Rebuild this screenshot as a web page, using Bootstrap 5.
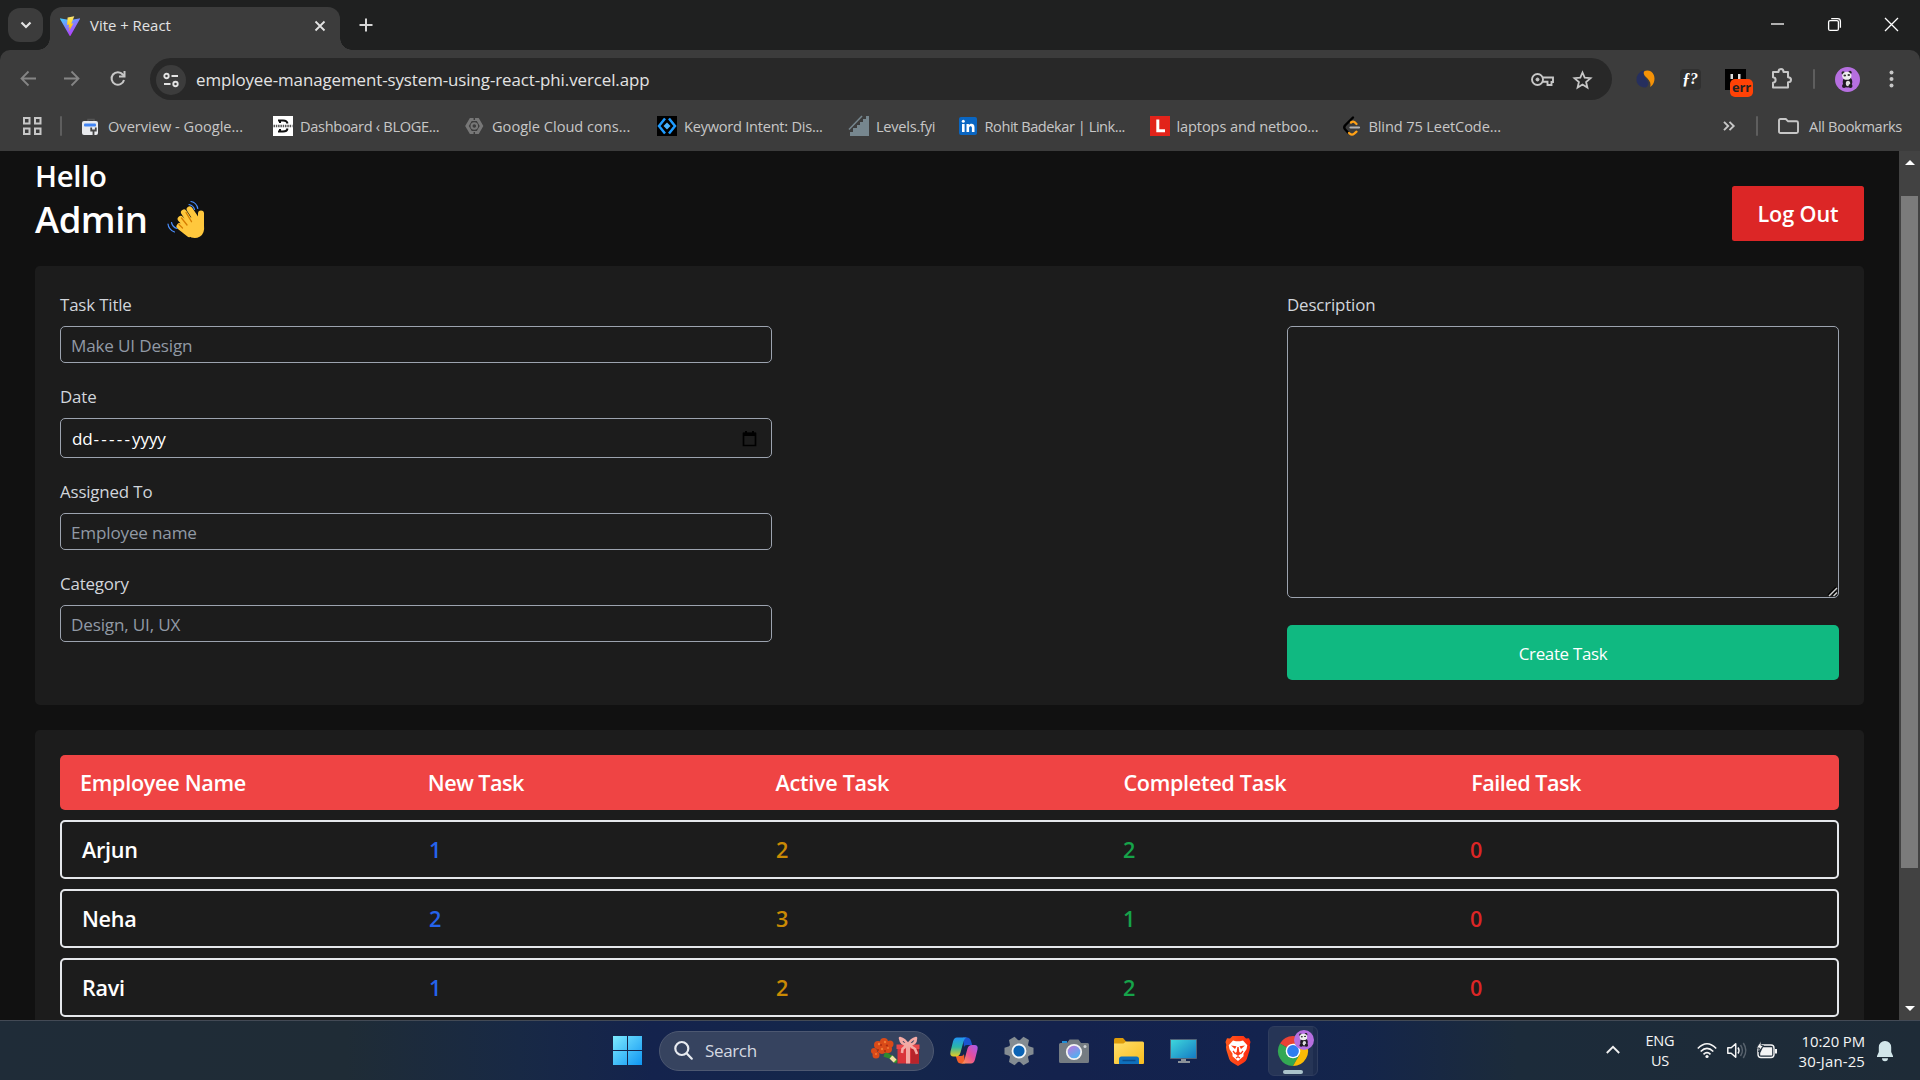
<!DOCTYPE html>
<html lang="en" data-bs-theme="dark">
<head>
<meta charset="utf-8">
<title>Vite + React</title>
<link href="https://cdn.jsdelivr.net/npm/bootstrap@5.3.0/dist/css/bootstrap.min.css" rel="stylesheet">
<style>
body{width:1920px;height:1080px;overflow:hidden;background:#111;color:#fff;font-family:"Open Sans","Noto Sans",sans-serif;font-size:16.9px;letter-spacing:-.17px;line-height:25px}
svg{display:block;flex:none;overflow:visible}
.titlebar{height:50px;background:#1f2020;padding-left:8px}
.tab-menu{width:35px;height:34px;border-radius:12px;background:#3c3c3c;margin-top:8px}
.browser-tab{width:290px;height:43px;margin:7px 0 0 7px;background:#3c3c3c;border-radius:12px 12px 0 0;padding:0 15px 6px 10px;font-size:14.9px;letter-spacing:0;color:#e3e3e3;position:relative}
.browser-tab span{margin-left:10px}
.browser-tab::before,.browser-tab::after{content:"";position:absolute;bottom:0;width:12px;height:12px}
.browser-tab::before{left:-12px;background:radial-gradient(circle at 0 0,transparent 11.5px,#3c3c3c 12px)}
.browser-tab::after{right:-12px;background:radial-gradient(circle at 100% 0,transparent 11.5px,#3c3c3c 12px)}
.new-tab{margin:18px 0 0 19px}
.window-buttons{padding:0 22px 2px 0;gap:44px}
.chrome-top{background:#1f2020}
.chrome-bars{height:101px;background:#3c3c3c;border-radius:10px 10px 0 0}
.address-row{height:58px;padding:0 26px 0 20px}
.nav-forward{margin-left:28px}.nav-reload{margin-left:30px}
.omnibox{width:1462px;height:42px;border-radius:21px;background:#282828;margin-left:24px;padding:1px 20px 0 6px;font-size:16.9px;letter-spacing:-.08px;color:#e3e3e3}
.omnibox-url{margin-left:10px}
.omnibox-star{margin-left:19px}
.site-info{width:30px;height:30px;border-radius:50%;background:#3c3c3c}
.ext-icons{margin-left:24px;gap:24.5px}
.ext-fn{width:21px;height:21px;background:#303030;border-radius:4px;font:italic bold 16px "Liberation Serif",serif}
.ext-err{width:21px;height:21px;background:#000}
.ext-badge{position:absolute;left:5px;top:10px;width:23px;height:18px;border-radius:5px;background:#ff4206;color:#222;font:bold 13px/17px "Open Sans",sans-serif;letter-spacing:-.2px;text-align:center}
.profile-area{margin-left:20px;gap:20px}
.menu-dots{margin-left:9px}
.rule{width:2px;height:20px;background:#5e5e5e;border-radius:1px}
.bookmark-row{height:35px;padding:0 18px 0 22px;font-size:14.6px;line-height:20px;color:#c7c7c7}
.bookmark-row>.rule{margin:0 19px 0 18px}
.bm{width:192px;gap:7px;white-space:nowrap}
.bm-short{width:108.5px}
.bm-last{width:auto}
.t-wide{letter-spacing:0}.t-1{letter-spacing:-.12px}.t-2{letter-spacing:-.25px}.t-3{letter-spacing:-.33px}.t-4{letter-spacing:-.45px}
.bookmark-row>.rule-end{margin:0 20px 0 21px}
.all-bm{margin-left:10px}
.page-view{height:869px;overflow:hidden}
.page-main{padding:5px 35px 0}
.hello{font-size:29.3px;line-height:40px;font-weight:600;letter-spacing:-.3px}
.admin{font-size:36.5px;line-height:45px;letter-spacing:-.5px;gap:19px;padding-top:1px;height:45px}
.wave{margin-top:3px}
.fw-mid{font-weight:600;font-size:21.6px;letter-spacing:-.3px;line-height:35px}
.grid-head .tight{letter-spacing:-.5px}
.btn-logout{width:132px;height:55px;background:#dc2626;border-radius:2.5px;padding:0;letter-spacing:-.1px}
.panel{background:#1c1c1c;border-radius:5px;padding:25px;margin-top:25px}
.panel-form{height:439px}
.panel-form label{display:block;height:35px;padding-top:1px;color:#d1d5db;line-height:25px}
.field{height:37px;width:100%;border:1px solid #9ca3af;border-radius:5px;background:transparent;padding:1px 10px 0;color:#fff;margin-bottom:20px;display:block;font-size:17.1px;letter-spacing:-.17px;outline:0}
.field::placeholder{color:#9199a5;opacity:1}
.field-date{height:40px;padding:0 14px 0 11px}
.dashes{letter-spacing:2.200px;margin-left:1px}
textarea.field{height:272px;margin-bottom:27px;resize:none}
.grip{position:absolute;right:2px;bottom:2px}
.col-left{width:712px}.col-right{width:552px}
.btn-create{height:55px;background:#10b981;border-radius:5px;color:#fff;padding-top:2px;letter-spacing:-.3px}
.grid-head,.grid-line{border-radius:5px}
.grid-head{background:#ef4444;height:55px;padding:0 20px}
.grid-line{height:59px;border:2px solid #e5e7eb;padding:0 20px;margin-top:10px}
.grid-head>*,.grid-line>*{width:20%;flex:none}
.c-new{color:#2563eb}.c-act{color:#ca8a04}.c-done{color:#16a34a}.c-fail{color:#dc2626}
.scroll-rail{width:21px;background:#424242;padding:9px 0}
.scroll-thumb{width:17px;height:672px;background:#7b7b7b;margin-top:31px}
.taskbar{height:60px;border-top:1px solid #434a55;background:linear-gradient(90deg,#1f2c38 0,#1f2c36 18%,#182945 27%,#14234d 34%,#14274a 44%,#14224d 55%,#13234e 66%,#14254a 71%,#1c2b3a 79%,#1e2b37 100%);padding-left:613px;color:#f5f5f5}
.search-pill{width:275px;height:40px;border-radius:20px;background:#36435f;border:1px solid #4d5871;margin:0 2.5px 0 17px;padding:0 13px 0 14px;gap:12px;font-size:17px;letter-spacing:-.35px;color:#d5d9e1}
.app-slot{width:54.9px;height:59px}
.app-active{width:50px;height:50px;border-radius:6px;background:linear-gradient(90deg,#263556 44px,#1d2c4e 44px);border:1px solid #2f3d5e;padding:9px;position:relative}
.app-active::after{content:"";position:absolute;left:14px;bottom:1px;width:20px;height:4px;border-radius:2px;background:#abc3cb}
.app-avatar{position:absolute;left:25px;top:3px}
.tray{padding-right:26px;font-size:14.5px;line-height:20px}
.tray-lang{width:40px;margin:0 17px 0 20px}
.tray-icons{gap:10px}
.tray-clock{width:88px;font-size:14.9px;letter-spacing:-.1px;margin-right:11px}
.tray-date{letter-spacing:.15px}
</style>
<script src="https://cdn.jsdelivr.net/npm/bootstrap@5.3.0/dist/js/bootstrap.bundle.min.js"></script>
</head>
<body>
<div class="chrome-top">
  <div class="titlebar d-flex">
    <div class="tab-menu d-flex align-items-center justify-content-center"><svg width="12" height="8" fill="none" stroke="#e3e3e3" stroke-width="2.200"><path d="M1.500 1.500 6 6l4.500-4.500"/></svg></div>
    <div class="browser-tab d-flex align-items-center">
      <svg width="20" height="20" viewBox="0 0 20 20"><defs><linearGradient id="va" x1="0" y1="0" x2=".6" y2="1"><stop offset="0" stop-color="#41d1ff"/><stop offset="1" stop-color="#bd34fe"/></linearGradient><linearGradient id="vb" x1="0" y1="0" x2="0" y2="1"><stop offset="0" stop-color="#ffea83"/><stop offset=".3" stop-color="#ffdd35"/><stop offset="1" stop-color="#ffa800"/></linearGradient></defs><path fill="url(#va)" d="M19.800 3.300 10.500 19.700a.5.5 0 0 1-.9 0L.2 3.300a.5.5 0 0 1 .6-.8l9.200 1.600 9.200-1.600a.5.5 0 0 1 .6.8z"/><path fill="url(#vb)" d="M14.300.2 7.600 1.500l-.5 7.500 2-.4-.6 3.100 1.300-.4-.9 4.300 4.500-8.300-2.200.4z"/></svg>
      <span>Vite + React</span>
      <svg class="ms-auto" width="10" height="10" stroke="#e3e3e3" stroke-width="1.800"><path d="m.5.5 9 9m0-9-9 9"/></svg>
    </div>
    <svg class="new-tab" width="14" height="14" stroke="#d6d6d6" stroke-width="2"><path d="M7 .5v13M.5 7h13"/></svg>
    <div class="window-buttons ms-auto d-flex align-items-center">
      <svg width="13" height="13" stroke="#fff" stroke-width="1.300"><path d="M0 6h13"/></svg>
      <svg width="13" height="13" fill="none" stroke="#fff" stroke-width="1.300"><rect x=".6" y="2.600" width="9.800" height="9.800" rx="1.500"/><path d="M3.200.6h6.500a2.700 2.700 0 0 1 2.700 2.700v6.500"/></svg>
      <svg width="13" height="13" stroke="#fff" stroke-width="1.300"><path d="m0 0 13 13M13 0 0 13"/></svg>
    </div>
  </div>
  <div class="chrome-bars">
    <div class="address-row d-flex align-items-center">
      <svg width="16" height="16" fill="none" stroke="#858585" stroke-width="1.800"><path d="M16 7.500H2m6.500-7-7 7 7 7"/></svg>
      <svg class="nav-forward" width="16" height="16" fill="none" stroke="#858585" stroke-width="1.800"><path d="M0 7.500h14M7.500.5l7 7-7 7"/></svg>
      <svg class="nav-reload" width="16" height="16" fill="none" stroke="#c7c7c7" stroke-width="2"><path d="M14 9A6.300 6.300 0 1 1 12.800 3.500L14 4.800"/><path d="M14.500 0v5.500H9"/></svg>
      <div class="omnibox d-flex align-items-center">
        <span class="site-info d-flex align-items-center justify-content-center"><svg width="16" height="14" fill="none" stroke="#e3e3e3" stroke-width="1.900"><circle cx="3.500" cy="3" r="2.200"/><path d="M8.500 3H15M1 11h6.500"/><circle cx="12.500" cy="11" r="2.200"/></svg></span>
        <span class="omnibox-url">employee-management-system-using-react-phi.vercel.app</span>
        <svg class="ms-auto" width="23" height="15" fill="none" stroke="#c7c7c7" stroke-width="1.900"><circle cx="6.500" cy="7.500" r="5.500"/><circle cx="6.500" cy="7.500" r="1.500" fill="#c7c7c7" stroke-width="1"/><path d="M11.500 5.500H22v4.500h-1.500v3h-4V9.700h-5"/></svg>
        <svg class="omnibox-star" width="19" height="18" fill="none" stroke="#c7c7c7" stroke-width="1.800"><path d="m9.500 1.500 2.200 5.200 5.800.5-4.400 3.800 1.300 5.600-4.900-3-4.900 3 1.300-5.600L1.500 7.200l5.800-.5z"/></svg>
      </div>
      <div class="ext-icons d-flex align-items-center">
        <svg width="19" height="18" viewBox="0 0 19 18"><path fill="#262f5e" d="M8 .5A9 9 0 0 0 .5 10c0 5 5 7.500 9 7.500 3-1.500 3.500-4 2-6.500S7 7 8 .5z"/><path fill="#f59207" d="M8 1.500c3-2 8-1 9.800 3.500s0 10-3.600 12c1-3-.2-6-2.700-8.500S7 4.500 8 1.500z"/></svg>
        <span class="ext-fn d-flex align-items-center justify-content-center">ƒ?</span>
        <span class="ext-err position-relative"><svg width="21" height="10" fill="#ddd"><path d="M5.500 5h2.500v5H5.500zM13 5h2.500v5H13z"/></svg><span class="ext-badge">err</span></span>
        <svg width="22" height="22" fill="none" stroke="#c7c7c7" stroke-width="2"><path d="M2 4h5.500c0-4 5-4 5 0H17v5.200c4 0 4 5 0 5V19.500H2v-4.800c3.500-.5 3.500-5 0-5.400z" stroke-linejoin="round"/></svg>
      </div>
      <div class="profile-area d-flex align-items-center flex-grow-1">
        <span class="rule"></span>
        <svg width="25" height="25" viewBox="0 0 25 25"><g id="panda"><circle cx="12.500" cy="12.500" r="12.500" fill="#b66fe0"/><circle cx="8.200" cy="6" r="1.700" fill="#222"/><circle cx="15" cy="5.500" r="1.700" fill="#222"/><ellipse cx="12.500" cy="15" rx="4.800" ry="5.500" fill="#1e1a22"/><ellipse cx="13" cy="16.500" rx="2.200" ry="2.800" fill="#ddd"/><ellipse cx="11.800" cy="8.800" rx="4.700" ry="4" fill="#eee"/><ellipse cx="9.800" cy="8.500" rx="1.300" ry=".9" fill="#333"/><ellipse cx="13.800" cy="8" rx="1.300" ry=".9" fill="#333"/><circle cx="9" cy="19" r="2" fill="#1e1a22"/><circle cx="15.500" cy="19" r="2" fill="#1e1a22"/></g></svg>
        <svg class="menu-dots" width="5" height="19" fill="#c7c7c7"><circle cx="2.500" cy="2.500" r="2"/><circle cx="2.500" cy="9" r="2"/><circle cx="2.500" cy="15.500" r="2"/></svg>
      </div>
    </div>
    <div class="bookmark-row d-flex align-items-center">
      <svg width="20" height="18" fill="none" stroke="#c7c7c7" stroke-width="2"><path d="M2 1h5.500v5.500H2zM13 1h5.500v5.500H13zM2 11.500h5.500V17H2zM13 11.500h5.500V17H13z"/></svg>
      <span class="rule"></span>
      <div class="bm d-flex align-items-center"><svg width="20" height="20"><path d="M7 5V3.500h6V5" fill="none" stroke="#555" stroke-width="1.500"/><rect x="1" y="5" width="16" height="14" rx="2" fill="#e8eaed"/><rect x="3" y="7.500" width="12" height="3" rx="1" fill="#4285f4"/><path d="M12.500 19.500v-4m-2.300-4v3h4.600v-3" stroke="#444" stroke-width="1.800" fill="none"/></svg><span class="t-wide">Overview - Google...</span></div>
      <div class="bm d-flex align-items-center"><svg width="20" height="20"><path fill="#fff" d="M0 0h20v20H0z"/><path d="M5 4.500h5q4 0 4.500 3M5 15.500h5q4 0 4.500-3M7 5v2M7 13v2" fill="none" stroke="#111" stroke-width="2"/><path d="M.5 10h19" stroke="#555" stroke-width="2.500" stroke-dasharray="1.500 .8"/></svg><span class="t-3">Dashboard ‹ BLOGE...</span></div>
      <div class="bm d-flex align-items-center"><svg width="20" height="20" fill="none" stroke="#777"><path d="M5.800 3.500h7L16.500 10l-3.700 6.500h-7L2 10z" stroke-width="3.200"/><circle cx="9.300" cy="10" r="2.800" stroke-width="2"/><path d="M9.300 0v4M9.300 16v4" stroke="#3c3c3c" stroke-width="1.500"/></svg><span class="t-wide">Google Cloud cons...</span></div>
      <div class="bm d-flex align-items-center"><svg width="20" height="20"><path d="M0 0h20v20H0z"/><path d="M8 2.500 2 10l6 7.500M12 2.500 18 10l-6 7.500" fill="none" stroke="#1e9bff" stroke-width="2.500"/><path d="m10 6.500 3.500 3.500-3.500 3.500L6.500 10z" fill="#4ab4ff"/></svg><span class="t-2">Keyword Intent: Dis...</span></div>
      <div class="bm bm-short d-flex align-items-center"><svg width="20" height="20"><path d="M1 20v-4h3v-4h4V9h3V6h3V3h3V0h3v20z" fill="#76868e"/><path d="M0 13.500 13 0" stroke="#76868e" stroke-width="1.500"/></svg><span class="t-2">Levels.fyi</span></div>
      <div class="bm d-flex align-items-center"><svg width="20" height="20"><rect x="1" y="1" width="18" height="18" rx="2" fill="#0a66c2"/><path d="M4 8h2.600v8H4zM8.500 8h2.400v1.200c1.400-2.200 5.600-2 5.600 2V16h-2.600v-4.200c0-2.300-2.800-2.100-2.800 0V16H8.500z" fill="#fff"/><circle cx="5.300" cy="5.200" r="1.500" fill="#fff"/></svg><span class="t-4">Rohit Badekar | Link...</span></div>
      <div class="bm d-flex align-items-center"><svg width="20" height="20"><path fill="#e2231a" d="M0 0h20v20H0z"/><path d="M7.800 3.500v11.200H15" fill="none" stroke="#fff" stroke-width="3"/></svg><span class="t-1">laptops and netboo...</span></div>
      <div class="bm bm-last d-flex align-items-center"><svg width="20" height="20" fill="none" stroke-linecap="round"><path d="m11 1.500-8 8q-1.500 2 0 3.800l3 3.200" stroke="#000" stroke-width="2.400"/><path d="m7 17 .8.700q2.200 1.800 4.400 0l2.300-2M9 6.500q2.500-2 4.500.5l1 1" stroke="#ffa116" stroke-width="2.300"/><path d="M8.500 11.500h8.500" stroke="#b3b3b3" stroke-width="2.200"/></svg><span class="t-1">Blind 75 LeetCode...</span></div>
      <svg class="ms-auto" width="12" height="10" fill="none" stroke="#c7c7c7" stroke-width="1.900"><path d="m1 .8 4.200 4.200L1 9.200M6.500.8 10.700 5 6.500 9.200"/></svg>
      <span class="rule rule-end"></span>
      <svg width="21" height="16" fill="none" stroke="#c7c7c7" stroke-width="1.900"><path d="M1 13.500v-11Q1 1 2.500 1h5.300l2.300 2.300h8.400Q20 3.300 20 4.800v8.700q0 1.500-1.500 1.500h-16Q1 15 1 13.500z"/></svg>
      <span class="all-bm t-3">All Bookmarks</span>
    </div>
  </div>
</div>

<div class="page-view d-flex">
  <main class="page-main flex-grow-1">
    <header class="d-flex align-items-end justify-content-between">
      <div>
        <div class="hello">Hello</div>
        <div class="hello admin d-flex">Admin
          <svg class="wave" width="38" height="40" viewBox="0 0 38 40" stroke-linecap="round" stroke-linejoin="round"><g fill="none" stroke="#ffc83d" stroke-width="6"><path d="M22.700 9.300 31 22M17 12.500l9 14M13.700 19l10 11M12.500 26.300 22 34M34 13.500v14"/></g><path fill="#ffc83d" d="M17 20 28 16l9 10q1 7-4 10.500-6 3.500-12-1L11 27z"/><path fill="none" stroke="#d67d00" stroke-width="1.300" d="m19 12.500 5.500 9.200M14.500 18l5.500 7M12 24.500l3.500 3.500"/><path fill="none" stroke="#4a8fff" stroke-width="1.200" d="M24 1.500q5.500 1 6.800 7M22 4.500q4.500 1 5.500 5M1 24q.5 5.500 6.500 8M4.500 22.500q1 4.500 5.500 6"/></svg>
        </div>
      </div>
      <button class="btn btn-logout text-white fw-mid">Log Out</button>
    </header>

    <form class="panel panel-form d-flex justify-content-between">
      <div class="col-left">
        <label>Task Title</label><input class="field" placeholder="Make UI Design">
        <label>Date</label>
        <div class="field field-date d-flex align-items-center justify-content-between"><span>dd<span class="dashes">-----</span>yyyy</span>
          <svg width="15" height="17"><path d="M1.500 3.500h12v12h-12z" fill="none" stroke="#000" stroke-width="1.700"/><path d="M1 2.500h13V6H1zM3 1h2v2H3zM10 1h2v2h-2z"/></svg></div>
        <label>Assigned To</label><input class="field" placeholder="Employee name">
        <label>Category</label><input class="field" placeholder="Design, UI, UX">
      </div>
      <div class="col-right">
        <label>Description</label>
        <div class="position-relative"><textarea class="field"></textarea>
          <svg class="grip" width="9" height="9" stroke-width="1.400"><path d="M0 8 8 0M4.500 8 8 4.500" stroke="#000"/><path d="M1 9 9 1M5.500 9 9 5.500" stroke="#d0d0d0"/></svg></div>
        <div class="btn-create d-flex align-items-center justify-content-center">Create Task</div>
      </div>
    </form>

    <section class="panel">
      <div class="grid-head fw-mid d-flex align-items-center"><span>Employee Name</span><span class="tight">New Task</span><span>Active Task</span><span>Completed Task</span><span class="tight">Failed Task</span></div>
      <div class="grid-line fw-mid d-flex align-items-center"><span>Arjun</span><span class="c-new">1</span><span class="c-act">2</span><span class="c-done">2</span><span class="c-fail">0</span></div>
      <div class="grid-line fw-mid d-flex align-items-center"><span>Neha</span><span class="c-new">2</span><span class="c-act">3</span><span class="c-done">1</span><span class="c-fail">0</span></div>
      <div class="grid-line fw-mid d-flex align-items-center"><span>Ravi</span><span class="c-new">1</span><span class="c-act">2</span><span class="c-done">2</span><span class="c-fail">0</span></div>
    </section>
  </main>
  <div class="scroll-rail d-flex flex-column align-items-center">
    <svg width="10" height="5" fill="#fff"><path d="M5 0l5 5H0z"/></svg>
    <div class="scroll-thumb"></div>
    <svg class="mt-auto" width="10" height="5" fill="#fff"><path d="M0 0h10L5 5z"/></svg>
  </div>
</div>

<footer class="taskbar d-flex align-items-center">
  <svg width="29" height="29"><defs><linearGradient id="win" gradientUnits="userSpaceOnUse" x1="0" y1="0" x2="29" y2="29"><stop offset="0" stop-color="#7deaff"/><stop offset="1" stop-color="#0f95f2"/></linearGradient></defs><path fill="url(#win)" d="M0 0h14v14H0zM15 0h14v14H15zM0 15h14v14H0zM15 15h14v14H15z"/></svg>
  <div class="search-pill d-flex align-items-center">
    <svg width="19" height="19" fill="none" stroke="#e8ebf0" stroke-width="2.200" stroke-linecap="round"><circle cx="7.800" cy="7.500" r="6.500"/><path d="m12.800 12.500 5 5.200"/></svg>
    <span>Search</span>
    <svg class="ms-auto" width="50" height="28"><path d="M15 16 27 25M14 18l10 3" stroke="#2f8a2d" stroke-width="3.500"/><path d="m21 18 6 5-3 3z" fill="#58a83a"/><path d="m21 20 4 4" stroke="#f3dfa0" stroke-width="4"/><g fill="#d94a18"><circle cx="8" cy="8" r="4"/><circle cx="14" cy="5" r="4"/><circle cx="20" cy="7" r="3.500"/><circle cx="12" cy="12" r="5"/><circle cx="4" cy="14" r="3"/><circle cx="18" cy="12" r="4"/><circle cx="6" cy="18" r="3.500"/></g><g fill="#a82c10"><circle cx="11" cy="8" r="1"/><circle cx="17" cy="8.500" r="1"/><circle cx="8" cy="13" r="1"/><circle cx="15" cy="14" r="1"/></g><g fill="#f27a35"><circle cx="9" cy="7" r="1.200"/><circle cx="15" cy="5" r="1.200"/><circle cx="12" cy="12" r="1.200"/><circle cx="18" cy="11" r="1"/><circle cx="6" cy="17" r="1"/></g><path fill="#d9343a" d="M27.500 8h21.500v18.500H27.500z"/><path fill="#b8242b" d="M41 12h8v14.500h-8z"/><path fill="#e8474b" d="M26.500 7.500h23v4.500h-23z"/><path fill="#f3a7a2" d="M36 8h4v18.500h-4z"/><path fill="none" stroke="#f4aaa5" stroke-width="2.600" stroke-linejoin="round" d="M38 8Q31 8 30 1q5 1 8 7 3-6 8-7 0 7-8 7M37 8l-4.500 4-.5 4M39 8l6 4 2 5"/></svg>
  </div>
  <div class="app-slot d-flex align-items-center justify-content-center"><svg width="28" height="27"><defs><linearGradient id="cpa" x1="0" y1="0" x2="0" y2="1"><stop offset="0" stop-color="#2293f5"/><stop offset=".5" stop-color="#2bb7a7"/><stop offset="1" stop-color="#e8cd20"/></linearGradient><linearGradient id="cpb" x1="1" y1="0" x2="0" y2="1"><stop offset="0" stop-color="#a45cf0"/><stop offset=".5" stop-color="#e74e99"/><stop offset="1" stop-color="#ff9a48"/></linearGradient></defs><path fill="#1b54d0" d="M13 .5h4q3 0 4 3.500l1.200 4H17q-2.500 0-3 2z"/><path fill="#f0602a" d="M15 26.500h-4q-3 0-4-3.500L5.800 19H11q2.500 0 3-2z"/><path fill="url(#cpa)" d="M7 .5h10q-2.500.5-3.500 4l-3 11Q9.500 19.500 6 19.500H3.500Q-.5 19.500.5 14.500l2.500-10Q4 .5 7 .5z"/><path fill="url(#cpb)" d="M21 26.500H11q2.500-.5 3.500-4l3-11Q18.500 8 22 8h2.500q4 0 3 4.500l-2.500 10q-1 4-4 4z"/></svg></div>
  <div class="app-slot d-flex align-items-center justify-content-center"><svg width="30" height="30" viewBox="-15 -15 30 30"><g fill="#848c92"><circle r="10.800"/><path id="tooth" d="M-5-9-3.200-14.500h6.400L5-9z" transform="rotate(30)"/><use href="#tooth" transform="rotate(60)"/><use href="#tooth" transform="rotate(120)"/><use href="#tooth" transform="rotate(180)"/><use href="#tooth" transform="rotate(240)"/><use href="#tooth" transform="rotate(300)"/></g><circle r="6.500" fill="#0a63b5" stroke="#f5f8fa" stroke-width="1.800"/></svg></div>
  <div class="app-slot d-flex align-items-center justify-content-center"><svg width="30" height="24"><defs><linearGradient id="lens" x1="0" y1="0" x2=".6" y2="1"><stop offset="0" stop-color="#c86fd8"/><stop offset="1" stop-color="#4ab4f2"/></linearGradient></defs><path fill="#1f8fd6" d="M3 2h5v4H3z"/><path fill="#757c82" d="M1.500 4H8l2.500-3.500h9L22 4h6.500Q30 4 30 5.500v17q0 1.500-1.500 1.500h-27Q0 24 0 22.500v-17Q0 4 1.500 4z"/><circle cx="15" cy="13" r="7.200" fill="url(#lens)" stroke="#f2f2f2" stroke-width="1.800"/><circle cx="26" cy="7.500" r="1.500" fill="#cfd3d6"/></svg></div>
  <div class="app-slot d-flex align-items-center justify-content-center"><svg width="30" height="26"><defs><linearGradient id="fold" x1="0" y1="0" x2="1" y2="1"><stop offset="0" stop-color="#ffdf6b"/><stop offset="1" stop-color="#f9bd1e"/></linearGradient></defs><path fill="#dd9b0a" d="M0 1.500Q0 0 1.500 0H9l3.500 4v6H0z"/><path fill="url(#fold)" d="M0 5.500h9.500l2.500-2h16.500Q30 3.500 30 5v20q0 1-1 1H1q-1 0-1-1z"/><path fill="#0f70bd" d="M5 26v-5q0-2.500 2.500-2.500h15q2.500 0 2.500 2.500v5z"/><path d="M8.500 22.500h13" stroke="#0a4c8c" stroke-width="1.500"/></svg></div>
  <div class="app-slot d-flex align-items-center justify-content-center"><svg width="27" height="24"><defs><linearGradient id="mon" x1="0" y1="0" x2="1" y2="1"><stop offset="0" stop-color="#3ed8dc"/><stop offset="1" stop-color="#1479c4"/></linearGradient></defs><path fill="url(#mon)" stroke="#52657a" d="M.5.500h26v19H.5z"/><path fill="#8b9299" d="M11 20h5v2h4v2H8v-2h3z"/></svg></div>
  <div class="app-slot d-flex align-items-center justify-content-center"><svg width="26" height="30" viewBox="0 0 26 30"><defs><linearGradient id="brv"><stop offset="0" stop-color="#ff5a1c"/><stop offset="1" stop-color="#ff2a10"/></linearGradient></defs><path fill="url(#brv)" d="M7.500 0h11l2.500 2.500 3-.3L25.500 6l-.8 3q1 2-.2 5.500L21.800 23q-.8 2-3 3.500L13 30l-5.800-3.500q-2.200-1.500-3-3.500L1.500 14.500Q.3 11 1.300 9L.5 6 2 2.200l3 .3z"/><path fill="#fff" d="m8 4.500 3 .8h4l3-.8 4.300 4.800-.8 4-3 4.200v2.800L13 25l-5.500-4.700v-2.800l-3-4.200-.8-4z"/><path fill="#fb3c16" d="m6 9.500 5.500.8L10 13zM20 9.500l-5.500.8L16 13zM12.300 11h1.400l.6 5 2 1.300L13 20l-3.300-2.700 2-1.300z"/><path d="m8 15 2.500 3M18 15l-2.500 3M11 22l2-1.300 2 1.300" stroke="#fb3c16" stroke-width="1.200" fill="none"/></svg></div>
  <div class="app-slot d-flex align-items-center justify-content-center"><div class="app-active">
    <svg width="30" height="30" viewBox="-15 -15 30 30"><path fill="#e94235" d="M0 0-13-7.500A15 15 0 0 1 13-7.500z"/><path fill="#33a853" d="M0 0-13-7.500A15 15 0 0 0 0 15L6.500 3.700z"/><path fill="#fbbc05" d="M0-7.500h13A15 15 0 0 1 0 15L6.500 3.700z"/><circle r="7.300" fill="#fff"/><circle r="5.900" fill="#2f7df0"/></svg>
    <svg class="app-avatar" width="20" height="20" viewBox="0 0 25 25"><use href="#panda"/></svg>
  </div></div>
  <div class="tray ms-auto d-flex align-items-center">
    <svg width="14" height="9" fill="none" stroke="#f0f0f0" stroke-width="1.900"><path d="M.8 7 7 .8 13.200 7"/></svg>
    <div class="tray-lang text-center">ENG<br>US</div>
    <div class="tray-icons d-flex align-items-center">
      <svg width="20" height="16" fill="none" stroke="#f5f5f5" stroke-width="1.600"><path d="M.8 5.500q9.200-9.500 18.400 0M3.700 8.500q6.300-6.300 12.600 0M6.500 11.300q3.500-3.300 7 0"/><circle cx="10" cy="13.500" r="1.600" fill="#f5f5f5" stroke="none"/></svg>
      <svg width="20" height="17" fill="none" stroke="#f5f5f5" stroke-width="1.500"><path d="M.8 5.800h3.400l4.500-4v13.400l-4.500-4H.8z" stroke-linejoin="round"/><path d="M11 5.500q2 3 0 6"/><path d="M13.500 3q3.800 5.500 0 11M16.300 1q5 7.500 0 15" stroke="#59636e"/></svg>
      <svg width="20" height="17"><rect x="1" y="3" width="16" height="12.500" rx="3" fill="none" stroke="#f5f5f5" stroke-width="1.400"/><path d="M6 5.200h9.200v8.200H3.200V11z" fill="#f5f5f5"/><path d="M18 7h2v4.500h-2z" fill="#f5f5f5"/><path d="M4-1-.5 6h3L1.500 10 6.500 3.500H4z" fill="#f5f5f5" stroke="#1e2b37" stroke-width=".8"/></svg>
    </div>
    <div class="tray-clock text-end">10:20 PM<br><span class="tray-date">30-Jan-25</span></div>
    <svg width="18" height="20" fill="#d2e6ea"><path d="M9 0a6 6 0 0 1 6.200 6.200V11l1.800 4v1H1v-1l1.800-4V6.200A6 6 0 0 1 9 0zM6 17.200h6a3 3 0 0 1-6 0z"/></svg>
  </div>
</footer>
</body>
</html>
